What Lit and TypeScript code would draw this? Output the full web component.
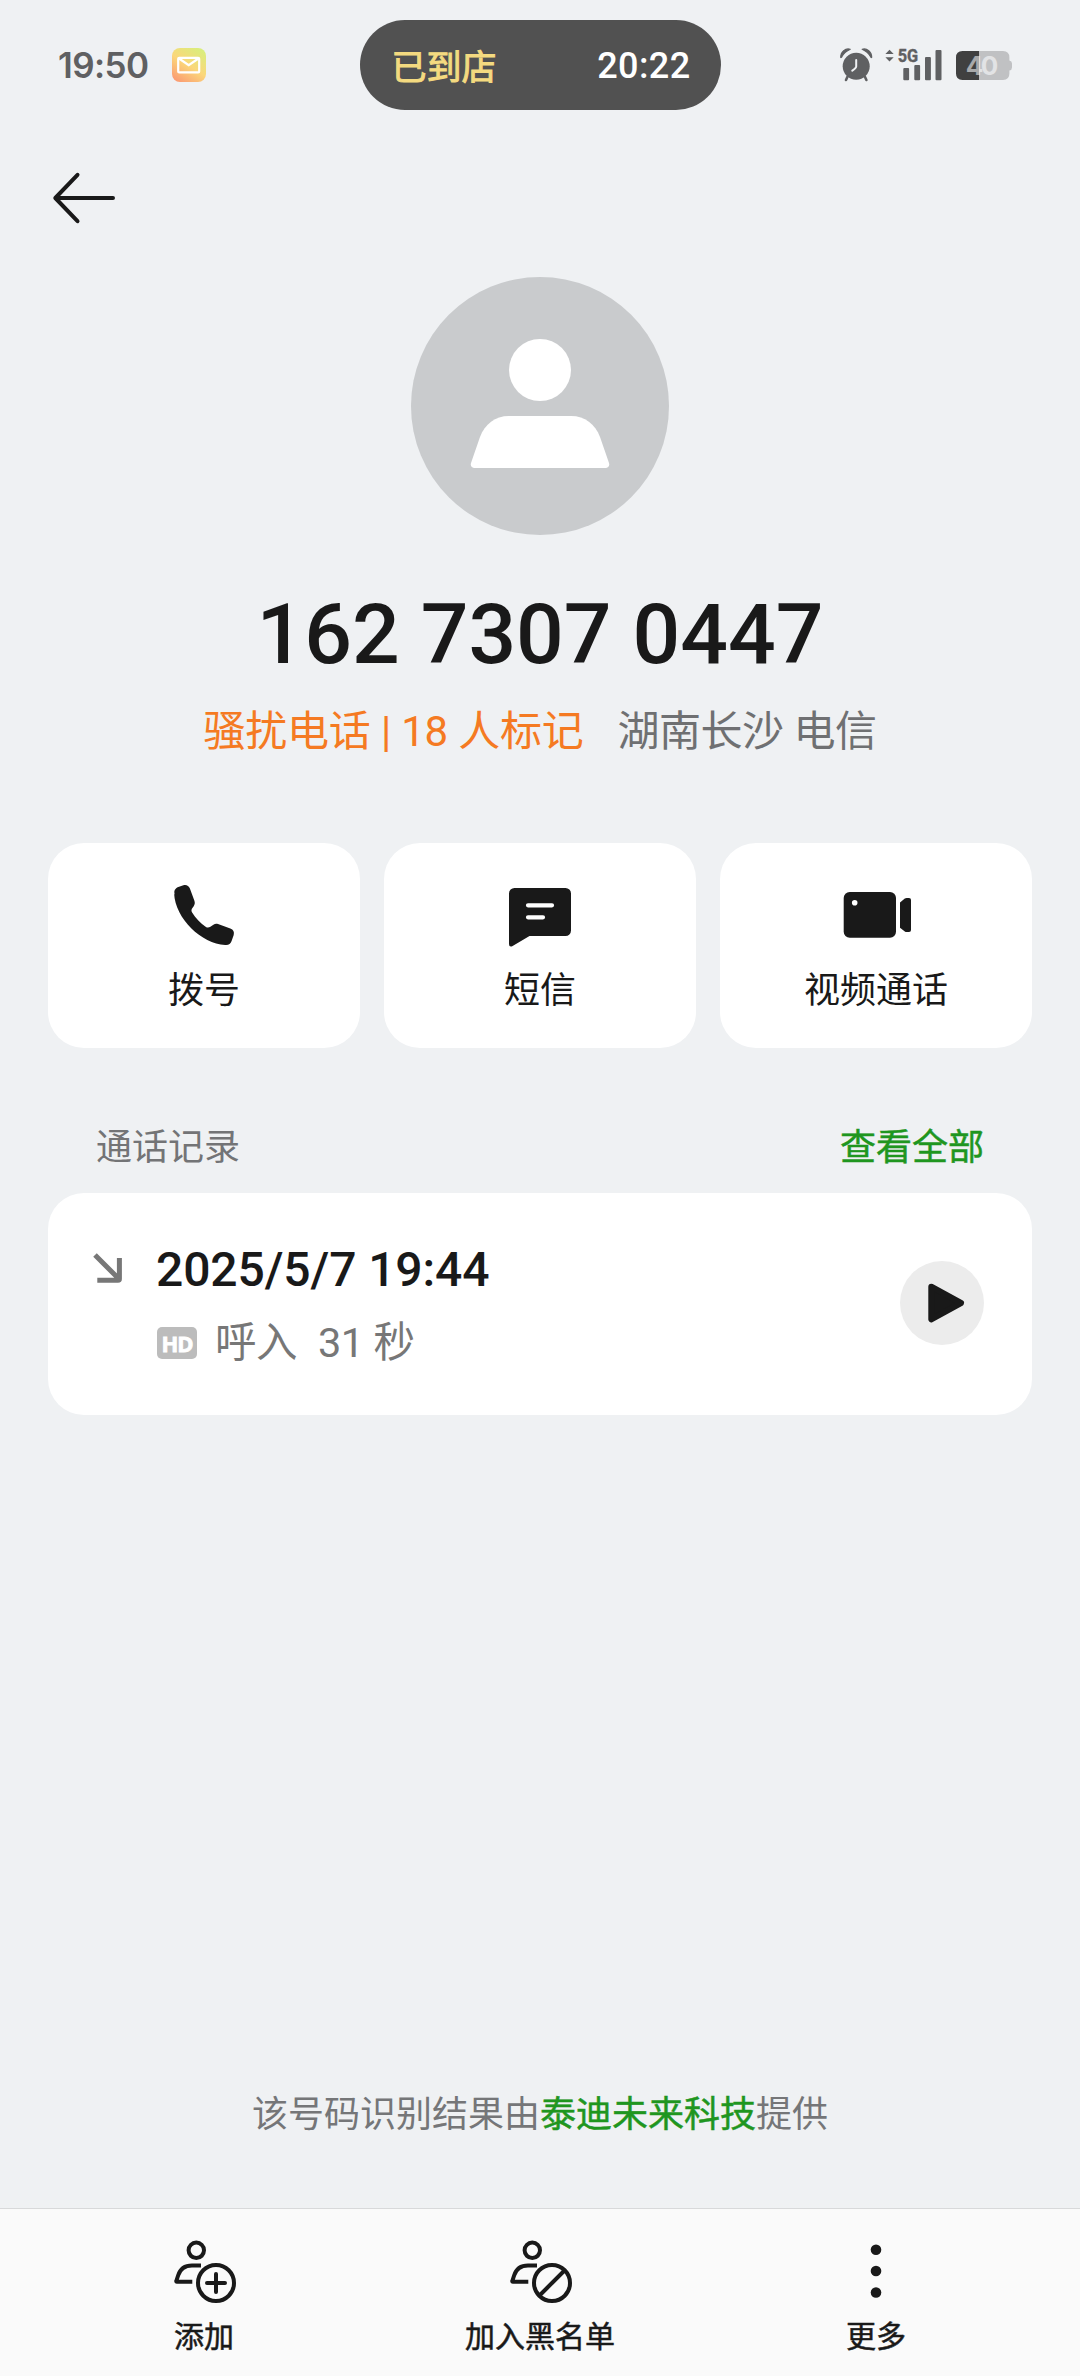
import { LitElement, html, svg, css } from "lit";
import { customElement, property } from "lit/decorators.js";

const icons = {
  call: svg`<path fill="currentColor" d="M7.2 16.2C5.6 12.600 6.200 10.300 9.600 8.200L15.400 6.200C18.400 5.400 20.600 6.600 21.900 9.600L26.400 21.800C27.100 24 26.900 25.400 25.700 27.200L23.900 29.700C23.300 31 23.300 32.100 24.100 33.600C27.400 38.800 32.300 44.200 37.600 47.700C39.100 48.700 40.400 48.800 42 48.100L45.400 45.700C47 44.700 48.200 44.500 50 45L62.300 49.400C65.400 50.700 66.500 52.700 65.700 55.900L63.600 61.900C62.500 65 60.600 66.200 57.200 65.900C33.500 64.600 7.400 39.800 6.100 14.400Z"/>`,
  message: svg`<path fill="currentColor" d="M5 14.500A5.500 5.500 0 0 1 10.500 9H61.500A5.500 5.500 0 0 1 67 14.500V51.500A5.500 5.500 0 0 1 61.500 57H25.500L8.200 67.300Q5 68.400 5 65Z"/><path d="M24 26.300H48M24 38.300H39" stroke="#fff" stroke-width="4.200" stroke-linecap="round"/>`,
  video: svg`<rect x="3.700" y="13" width="52.300" height="45.700" rx="6" fill="currentColor"/><path fill="currentColor" d="M60 23.500L64.800 19.600Q65.600 19 66.700 19H69Q71 19 71 21V51Q71 53 69 53H66.700Q65.600 53 64.800 52.400L60 48.700Z"/><circle cx="14.700" cy="23.700" r="2.800" fill="#fff"/>`,
  add: svg`<g fill="none" stroke="currentColor" stroke-width="4"><circle cx="28.300" cy="15.300" r="7.700"/><path d="M33 30.500H24C15.500 30.500 12 34.300 10.100 40.500L8.300 46Q8 46.800 8.900 46.800H24.300"/><circle cx="48" cy="48" r="18"/><path d="M39 48H57M48 39V57" stroke-linecap="round"/></g>`,
  block: svg`<g fill="none" stroke="currentColor" stroke-width="4"><circle cx="28.300" cy="15.300" r="7.700"/><path d="M33 30.500H24C15.500 30.500 12 34.300 10.100 40.500L8.300 46Q8 46.800 8.900 46.800H24.300"/><circle cx="48" cy="48" r="18"/><path d="M35.500 60.500L60.500 35.500"/></g>`,
  more: svg`<g fill="currentColor"><circle cx="36" cy="14.700" r="5.300"/><circle cx="36" cy="36" r="5.300"/><circle cx="36" cy="57.500" r="5.300"/></g>`,
};

type IconName = keyof typeof icons;

@customElement("line-icon")
class LineIcon extends LitElement {
  @property() name: IconName = "call";

  static styles = css`
    :host { display: block; width: 72px; height: 72px; }
    .icon { display: block; width: 72px; height: 72px; }
  `;

  render() {
    return html`<svg class="icon" viewBox="0 0 72 72">${icons[this.name]}</svg>`;
  }
}

@customElement("status-bar")
class StatusBar extends LitElement {
  static styles = css`
    :host {
      display: grid;
      grid-template-columns: 1fr 361px 1fr;
      align-items: center;
      height: 90px;
      padding-top: 20px;
      color: #5f6062;
    }
    .left { display: flex; align-items: center; gap: 24px; padding-left: 58px; }
    .clock { font: 600 35px/48px Inter, sans-serif; letter-spacing: -0.6px; }
    .mail { display: block; width: 34px; height: 34px; }
    .pill {
      box-sizing: border-box;
      height: 90px;
      border-radius: 45px;
      background: #515151;
      display: flex;
      align-items: center;
      justify-content: space-between;
      padding: 0 30px 0 32px;
    }
    .arrived { color: #f4da80; font: 400 35px/48px "Noto Sans CJK SC", sans-serif; -webkit-text-stroke: 1px #f4da80; }
    .eta { color: #fff; font: 500 36px/48px Roboto, sans-serif; letter-spacing: 0.4px; padding-top: 2px; }
    .right { display: flex; justify-content: flex-end; padding-right: 67px; }
    .signals { display: block; width: 174px; height: 52px; }
    .net { font: 700 18.5px Roboto, sans-serif; }
    .level { font: 700 26px Inter, sans-serif; }
  `;

  render() {
    return html`
      <div class="left">
        <span class="clock">19:50</span>
        <svg class="mail" viewBox="0 0 34 34">
          <defs>
            <linearGradient id="m" x1="0.150" y1="1" x2="0.800" y2="0">
              <stop offset="0" stop-color="#fb9a72" />
              <stop offset="0.500" stop-color="#fbd77a" />
              <stop offset="1" stop-color="#d9ee7c" />
            </linearGradient>
          </defs>
          <rect width="34" height="34" rx="8" fill="url(#m)" />
          <rect x="6.200" y="9.800" width="21" height="14.600" rx="1" fill="none" stroke="#fff" stroke-width="2.200" />
          <path d="M7 10.500L16.700 17.200L26.500 10.500" fill="none" stroke="#fff" stroke-width="2.200" />
        </svg>
      </div>
      <div class="pill">
        <span class="arrived">已到店</span>
        <span class="eta">20:22</span>
      </div>
      <div class="right">
        <svg class="signals" viewBox="0 -8 174 52">
          <g fill="#5f6062">
            <circle cx="17.200" cy="19.300" r="13.500" />
            <path d="M1.700 10.200C1.700 5 6.500 0.800 11.200 2.300Q5.500 5 2.800 9.800Q2 11 1.700 10.200ZM32.700 10.200C32.700 5 27.900 0.800 23.200 2.300Q28.900 5 31.600 9.800Q32.400 11 32.700 10.200Z" stroke="#5f6062" stroke-width="1.200" stroke-linejoin="round" />
            <path d="M8.600 29.500L7 33M25.800 29.500L27.400 33" stroke="#5f6062" stroke-width="2.600" stroke-linecap="round" />
            <path d="M17.200 13V19.500Q17.200 21 13.300 23.600" fill="none" stroke="#eff1f3" stroke-width="2" stroke-linecap="round" />
            <path d="M46.400 7L50.500 2.700L54.700 7ZM46.400 10.200L50.500 14.500L54.700 10.200Z" />
            <rect x="64.300" y="21" width="5.800" height="12.300" rx="1" />
            <rect x="75.300" y="18" width="5.800" height="15.300" rx="1" />
            <rect x="86" y="10" width="5.900" height="23.300" rx="1" />
            <rect x="96.500" y="3" width="6" height="30.300" rx="1" />
            <text class="net" x="58.700" y="15.300" textLength="20.500" lengthAdjust="spacingAndGlyphs" stroke="#5f6062" stroke-width="0.400">5G</text>
          </g>
          <defs>
            <linearGradient id="b" gradientUnits="userSpaceOnUse" x1="117" y1="0" x2="173" y2="0">
              <stop offset="0.411" stop-color="#404040" />
              <stop offset="0.411" stop-color="#c0c1c3" />
            </linearGradient>
            <linearGradient id="t" gradientUnits="userSpaceOnUse" x1="117" y1="0" x2="173" y2="0">
              <stop offset="0.411" stop-color="#a8a9aa" />
              <stop offset="0.411" stop-color="#e2e3e5" />
            </linearGradient>
          </defs>
          <path fill="url(#b)" d="M123.500 4H164Q170.400 4 170.400 10.500V13.500Q173 14 173 16.500V20.500Q173 23 170.400 23.500V26.500Q170.400 33 164 33H123.500Q117 33 117 26.500V10.500Q117 4 123.500 4Z" />
          <text class="level" fill="url(#t)" x="126.800" y="28" textLength="32.500">40</text>
        </svg>
      </div>
    `;
  }
}

@customElement("action-card")
class ActionCard extends LitElement {
  @property() icon: IconName = "call";
  @property() label = "";

  static styles = css`
    :host {
      display: flex;
      flex-direction: column;
      align-items: center;
      box-sizing: border-box;
      height: 205px;
      padding-top: 36px;
      gap: 16px;
      border-radius: 36px;
      background: #fff;
    }
    .label { font-size: 36px; line-height: 48px; }
  `;

  render() {
    return html`<line-icon name=${this.icon}></line-icon><span class="label">${this.label}</span>`;
  }
}

@customElement("app-root")
class AppRoot extends LitElement {
  private actions: { icon: IconName; label: string }[] = [
    { icon: "call", label: "拨号" },
    { icon: "message", label: "短信" },
    { icon: "video", label: "视频通话" },
  ];

  private tools: { icon: IconName; label: string }[] = [
    { icon: "add", label: "添加" },
    { icon: "block", label: "加入黑名单" },
    { icon: "more", label: "更多" },
  ];

  static styles = css`
    :host {
      display: flex;
      flex-direction: column;
      width: 1080px;
      height: 2376px;
      overflow: hidden;
      background: #eff1f3;
      color: #191919;
      font-family: Roboto, "Noto Sans CJK SC", sans-serif;
    }
    .nav { padding: 58px 0 0 48px; height: 109px; }
    .back { display: block; width: 72px; height: 60px; }
    .profile { display: flex; flex-direction: column; align-items: center; }
    .avatar { display: block; width: 258px; height: 258px; }
    .number { margin-top: 50px; font-size: 84px; font-weight: 500; line-height: 100px; white-space: pre; }
    .meta { display: flex; gap: 34px; margin-top: 17px; font-size: 42px; line-height: 60px; white-space: pre; }
    .spam { color: #f57a22; letter-spacing: -0.2px; }
    .place { color: #6f7072; letter-spacing: -0.5px; }
    .actions { display: grid; grid-template-columns: repeat(3, 1fr); gap: 24px; margin: 81px 48px 0; }
    .section { display: flex; justify-content: space-between; margin: 76px 96px 0; font-size: 36px; line-height: 48px; }
    .section-title { color: #737476; }
    .all { color: #1f961f; -webkit-text-stroke: 0.5px #1f961f; }
    .record {
      display: flex;
      box-sizing: border-box;
      height: 222px;
      margin: 21px 48px 0;
      padding: 0 48px 0 43px;
      border-radius: 36px;
      background: #fff;
    }
    .incoming { display: block; width: 34px; height: 34px; margin-top: 59px; }
    .details { flex: 1; padding: 47px 0 0 31px; }
    .time { font-size: 48px; font-weight: 500; line-height: 60px; letter-spacing: -0.1px; }
    .info { display: flex; align-items: center; margin-top: 13px; color: #777; font-size: 41.5px; line-height: 60px; letter-spacing: -0.5px; }
    .hd {
      width: 40px;
      height: 32px;
      margin: 0 18px 0 1px;
      border-radius: 5px;
      background: #bcbcbc;
      color: #fff;
      font: 700 22px/33px "Open Sans", sans-serif;
      letter-spacing: -1px;
      -webkit-text-stroke: 0.8px #fff;
      text-align: center;
    }
    .duration { margin-left: 21px; }
    .play { display: block; width: 84px; height: 84px; margin-top: 68px; }
    .source { margin-top: auto; padding-bottom: 68px; text-align: center; color: #757678; font-size: 36px; line-height: 50px; }
    .vendor { color: #1f961f; -webkit-text-stroke: 0.5px #1f961f; }
    .toolbar {
      display: grid;
      grid-template-columns: repeat(3, 336px);
      justify-content: center;
      box-sizing: border-box;
      height: 168px;
      padding-top: 26px;
      border-top: 1px solid #d8d9da;
      background: #fafafa;
    }
    .tool { display: flex; flex-direction: column; align-items: center; gap: 10px; font-size: 30px; line-height: 40px; -webkit-text-stroke: 0.5px #191919; }
  `;

  render() {
    return html`
      <status-bar></status-bar>
      <div class="nav">
        <svg class="back" viewBox="0 0 72 60" fill="none" stroke="#191919" stroke-width="4" stroke-linecap="round" stroke-linejoin="round">
          <path d="M65 30H8M29.500 6.800L7.300 30L29.500 53.200" />
        </svg>
      </div>
      <div class="profile">
        <svg class="avatar" viewBox="0 0 258 258">
          <circle cx="129" cy="129" r="129" fill="#c9cbcd" />
          <circle cx="129" cy="93" r="31" fill="#fff" />
          <path fill="#fff" d="M98 139H160C174 139 184 147 189 160L198 186Q199 190 195 191H63Q59 190 60 186L69 160C74 147 84 139 98 139Z" />
        </svg>
        <div class="number">162 7307 0447</div>
        <div class="meta"><span class="spam">骚扰电话 | 18 人标记</span><span class="place">湖南长沙 电信</span></div>
      </div>
      <div class="actions">
        ${this.actions.map((a) => html`<action-card icon=${a.icon} label=${a.label}></action-card>`)}
      </div>
      <div class="section"><span class="section-title">通话记录</span><span class="all">查看全部</span></div>
      <div class="record">
        <svg class="incoming" viewBox="0 0 34 34" fill="none" stroke="#777" stroke-width="5">
          <path d="M4 3L27 26M6.300 28.300H27Q28.400 28.300 28.400 27V6" />
        </svg>
        <div class="details">
          <div class="time">2025/5/7 19:44</div>
          <div class="info"><span class="hd">HD</span><span>呼入</span><span class="duration">31 秒</span></div>
        </div>
        <svg class="play" viewBox="0 0 84 84">
          <circle cx="42" cy="42" r="42" fill="#ececec" />
          <path d="M31.300 25.700L61 42L31.300 58.300Z" fill="#191919" stroke="#191919" stroke-width="6" stroke-linejoin="round" />
        </svg>
      </div>
      <div class="source">该号码识别结果由<span class="vendor">泰迪未来科技</span>提供</div>
      <div class="toolbar">
        ${this.tools.map((t) => html`<div class="tool"><line-icon name=${t.icon}></line-icon><span>${t.label}</span></div>`)}
      </div>
    `;
  }
}
